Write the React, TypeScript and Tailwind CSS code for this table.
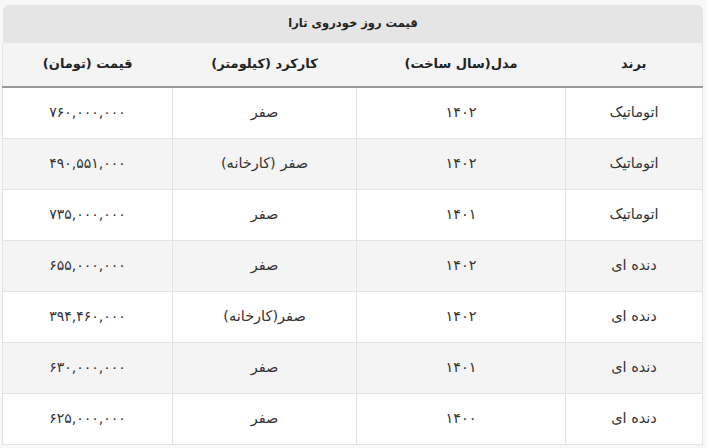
const rows = [
  { brand: "اتوماتیک", model: "۱۴۰۲", usage: "صفر", price: "۷۶۰,۰۰۰,۰۰۰" },
  { brand: "اتوماتیک", model: "۱۴۰۲", usage: "صفر (کارخانه)", price: "۴۹۰,۵۵۱,۰۰۰" },
  { brand: "اتوماتیک", model: "۱۴۰۱", usage: "صفر", price: "۷۳۵,۰۰۰,۰۰۰" },
  { brand: "دنده ای", model: "۱۴۰۲", usage: "صفر", price: "۶۵۵,۰۰۰,۰۰۰" },
  { brand: "دنده ای", model: "۱۴۰۲", usage: "صفر(کارخانه)", price: "۳۹۴,۴۶۰,۰۰۰" },
  { brand: "دنده ای", model: "۱۴۰۱", usage: "صفر", price: "۶۳۰,۰۰۰,۰۰۰" },
  { brand: "دنده ای", model: "۱۴۰۰", usage: "صفر", price: "۶۲۵,۰۰۰,۰۰۰" },
];

export default function App() {
  return (
    <div
      dir="rtl"
      className="h-[448px] w-[707px] overflow-hidden bg-[#f8f8f8] pl-[3px] pr-[4px] pt-[5px] text-[#333] [font-family:'DejaVu_Sans',sans-serif]"
    >
      <div className="flex h-[38px] items-center justify-center rounded-t-[6px] bg-[#e5e5e5] text-[11.5px] font-bold text-[#222]">
        قیمت روز خودروی تارا
      </div>
      <table className="w-[700px] table-fixed border-collapse border-x border-[#e3e3e3] bg-white text-[14.5px]">
        <colgroup>
          <col className="w-[137px]" />
          <col className="w-[209px]" />
          <col className="w-[184px]" />
          <col className="w-[170px]" />
        </colgroup>
        <thead>
          <tr className="h-[44px] border-b-2 border-[#999] bg-[#f4f4f4] text-[13px] font-bold text-[#222]">
            <th className="pb-[2px]">برند</th>
            <th className="pb-[2px]">مدل(سال ساخت)</th>
            <th className="pb-[2px]">کارکرد (کیلومتر)</th>
            <th className="pb-[2px]">قیمت (تومان)</th>
          </tr>
        </thead>
        <tbody>
          {rows.map((r, i) => (
            <tr
              key={i}
              className={
                i % 2 === 1
                  ? "h-[51px] border-b border-[#e3e3e3] bg-[#f4f4f4]"
                  : "h-[51px] border-b border-[#e3e3e3] bg-white"
              }
            >
              <td className="border-l border-[#e3e3e3] text-center">{r.brand}</td>
              <td className="border-l border-[#e3e3e3] text-center">{r.model}</td>
              <td className="border-l border-[#e3e3e3] text-center">{r.usage}</td>
              <td className="text-center text-[14px]">{r.price}</td>
            </tr>
          ))}
        </tbody>
      </table>
    </div>
  );
}
